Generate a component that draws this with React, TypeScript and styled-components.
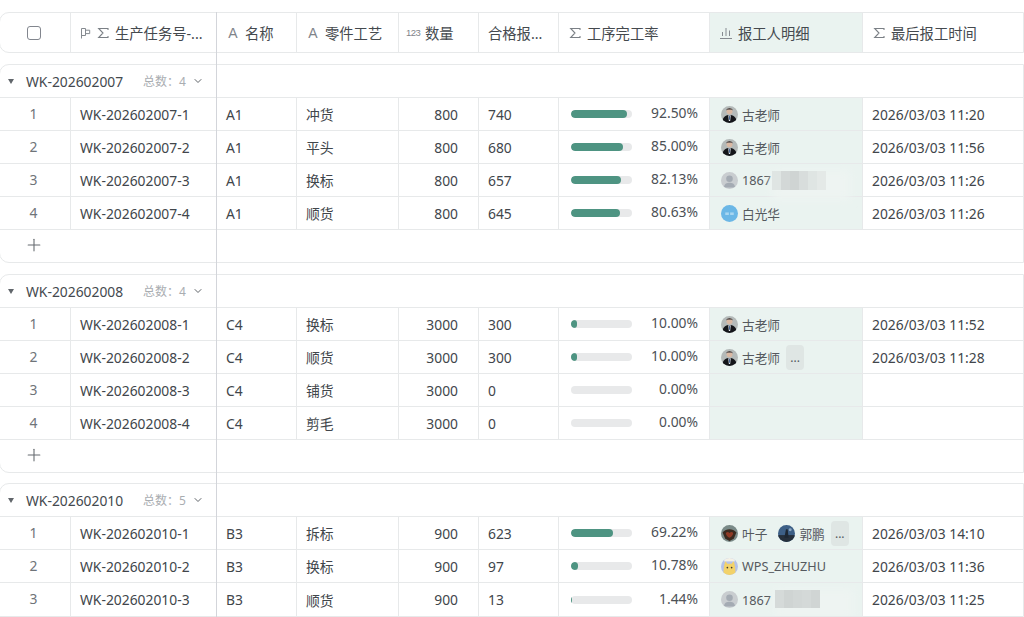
import * as React from 'react';
import styled, { createGlobalStyle } from 'styled-components';
import { ChevronDown, Plus } from 'lucide-react';

const COLUMNS = '71px 146px 80px 102px 80px 80px 151px 153px 1fr';
const LINE = '#e7e9ea';

const GlobalStyle = createGlobalStyle`
  html, body {
    margin: 0;
    height: 100%;
    overflow: hidden;
    background: #fff;
  }
  body {
    font-family: "Noto Sans", "Noto Sans CJK SC", sans-serif;
    font-size: 13.85px;
    color: #41464b;
  }
`;

const Sheet = styled.div`
  position: relative;
  height: 617px;
  overflow: hidden;
  padding-top: 12px;
  box-sizing: border-box;
  &::after {
    content: '';
    position: absolute;
    left: 216px;
    top: 12px;
    bottom: 0;
    width: 1px;
    background: #d3d5da;
  }
`;

const HeaderRow = styled.div`
  display: grid;
  grid-template-columns: ${COLUMNS};
  height: 41px;
  box-sizing: border-box;
  margin: 0 0 11px -1px;
  border: 1px solid ${LINE};
  border-radius: 10px 0 0 10px;
`;

const HeaderCell = styled.div<{ $tint?: boolean }>`
  display: flex;
  align-items: center;
  gap: 5px;
  padding-left: 9px;
  box-sizing: border-box;
  border-right: 1px solid ${LINE};
  background: ${(p) => (p.$tint ? '#eaf3f0' : 'transparent')};
  color: #44494e;
  font-size: 14.3px;
  white-space: nowrap;
  overflow: hidden;
  min-width: 0;
  &:last-child {
    border-right: 0;
  }
`;

const CheckCell = styled(HeaderCell)`
  justify-content: center;
  padding: 0 3px 0 0;
`;

const Check = styled.span`
  width: 14px;
  height: 14px;
  box-sizing: border-box;
  border: 1px solid #82868e;
  border-radius: 3px;
`;

const TypeGlyph = styled.span`
  width: 14px;
  text-align: center;
  color: #7f848a;
  font-size: 14px;
  font-family: "Liberation Sans", sans-serif;
  line-height: 1;
`;

const SmallGlyph = styled(TypeGlyph)`
  margin-left: -2px;
  font-size: 9.5px;
  letter-spacing: -0.5px;
`;

const Group = styled.section<{ $open?: boolean }>`
  border: 1px solid ${LINE};
  border-radius: ${(p) => (p.$open ? '10px 0 0 0' : '10px 0 0 10px')};
  margin: 0 0 11px -1px;
  overflow: hidden;
  &:nth-of-type(2) {
    margin-bottom: 10px;
  }
`;

const GroupHead = styled.div`
  display: flex;
  align-items: center;
  height: 33px;
  box-sizing: border-box;
  border-bottom: 1px solid ${LINE};
  padding-left: 8px;
`;

const Caret = styled.span`
  width: 0;
  height: 0;
  border-left: 3px solid transparent;
  border-right: 3px solid transparent;
  border-top: 5px solid #61666b;
  margin-right: 12px;
`;

const GroupName = styled.span`
  width: 117px;
  color: #44494e;
`;

const GroupCount = styled.span`
  display: flex;
  align-items: center;
  gap: 6px;
  font-size: 12px;
  color: #a9adb1;
  svg {
    color: #5f6469;
  }
`;

const Row = styled.div`
  display: grid;
  grid-template-columns: ${COLUMNS};
  height: 33px;
  box-sizing: border-box;
  border-bottom: 1px solid ${LINE};
  &:last-child {
    border-bottom: 0;
  }
`;

const AddRow = styled(Row)`
  height: 32px;
`;

const Cell = styled.div<{ $right?: boolean; $tint?: boolean }>`
  position: relative;
  display: flex;
  align-items: center;
  justify-content: ${(p) => (p.$right ? 'flex-end' : 'flex-start')};
  padding: ${(p) => (p.$right ? '0 20px 0 0' : '0 0 0 9px')};
  box-sizing: border-box;
  border-right: 1px solid ${LINE};
  background: ${(p) => (p.$tint ? '#eaf3f0' : 'transparent')};
  white-space: nowrap;
  min-width: 0;
  &:last-child {
    border-right: 0;
  }
`;

const IndexCell = styled(Cell)`
  justify-content: center;
  padding: 0 3px 2px 0;
  color: #6f7479;
`;

const AddCell = styled(Cell)`
  justify-content: center;
  padding: 0 3px 2px 0;
  color: #666b70;
`;

const ProgressCell = styled(Cell)`
  justify-content: space-between;
  padding: 0 11px 0 12px;
`;

const Track = styled.span`
  display: block;
  width: 61px;
  height: 8px;
  border-radius: 4px;
  background: #e8e9ea;
  overflow: hidden;
`;

const Fill = styled.span`
  display: block;
  height: 100%;
  border-radius: 4px;
  background: #4e9482;
`;

const Percent = styled.span`
  margin-bottom: 3px;
  color: #4c5156;
`;

const PeopleCell = styled(Cell)`
  padding-left: 11px;
  gap: 11px;
  overflow: visible;
`;

const Person = styled.span`
  display: flex;
  align-items: center;
  gap: 4px;
  font-size: 12.7px;
  color: #55595e;
`;

const More = styled.span`
  display: flex;
  align-items: flex-end;
  justify-content: center;
  width: 18px;
  height: 25px;
  margin-left: -5px;
  padding-bottom: 6px;
  box-sizing: border-box;
  border-radius: 4px;
  background: #dfe6e4;
  font-size: 12px;
  line-height: 1;
  color: #55595e;
`;

const Mosaic = styled.svg`
  position: absolute;
  top: 0;
  z-index: 2;
  pointer-events: none;
`;

type Face = 'teacher' | 'blank' | 'blue' | 'leaf' | 'peng' | 'pika';

const Avatar = ({ face }: { face: Face }) => (
  <svg width="17" height="17" viewBox="0 0 16 16" style={{ flex: 'none' }}>
    <defs>
      <clipPath id="round">
        <circle cx="8" cy="8" r="8" />
      </clipPath>
    </defs>
    <g clipPath="url(#round)">
      {face === 'teacher' && (
        <>
          <rect width="16" height="16" fill="#b4bab9" />
          <circle cx="8" cy="5" r="2.8" fill="#d9b9a4" />
          <path d="M5 4.200C5 1.400 11 1.400 11 4.200L10 3.200H6Z" fill="#26262a" />
          <path d="M1 16C1.500 9.500 5 8.500 8 8.500s6.500 1 7 7.500Z" fill="#14161a" />
          <path d="M6.800 8.600h2.400L8.600 14H7.400Z" fill="#e8ecef" />
          <path d="M7.600 9.200h.8l.2 3.800H7.400Z" fill="#45628f" />
        </>
      )}
      {face === 'blank' && (
        <>
          <rect width="16" height="16" fill="#c9cdd0" />
          <circle cx="8" cy="6.300" r="3.100" fill="#a4abb3" />
          <path d="M2.800 14.500C3.200 10.500 5.500 10 8 10s4.800.5 5.200 4.500Z" fill="#a4abb3" />
        </>
      )}
      {face === 'blue' && (
        <>
          <rect width="16" height="16" fill="#6bb7e6" />
          <rect x="4" y="7" width="3.400" height="2.400" fill="#a9d6f1" />
          <rect x="8.600" y="7" width="3.400" height="2.400" fill="#a9d6f1" />
        </>
      )}
      {face === 'leaf' && (
        <>
          <rect width="16" height="16" fill="#7a8a88" />
          <path d="M1.500 7C5 3 11 3 14.500 7L12 13 8 15 4 13Z" fill="#3a2a20" />
          <path d="M4.500 7.500C6 6 7 6.500 8 7.500 9 6.500 10.500 6 11.500 7.500 11.500 10 9 11.500 8 12 7 11.500 4.500 10 4.500 7.500Z" fill="#8f3a26" />
        </>
      )}
      {face === 'peng' && (
        <>
          <rect width="16" height="16" fill="#3d5f86" />
          <rect y="9.500" width="16" height="6.500" fill="#26303c" />
          <path d="M6 12 7.500 4h1.600L10 12Z" fill="#1d2733" />
          <circle cx="11.500" cy="4.500" r="1.400" fill="#8ea8c2" />
        </>
      )}
      {face === 'pika' && (
        <>
          <rect width="16" height="16" fill="#b5c2e8" />
          <path d="M2.500 16C2 9 3.500 5.500 4 2.500L6 5.500h4l2-3C12.500 5.500 14 9 13.500 16Z" fill="#f2d26a" />
          <rect x="3" y="0" width="10" height="3.200" fill="#f4f1e6" />
          <circle cx="6" cy="9" r=".8" fill="#3d3a30" />
          <circle cx="10" cy="9" r=".8" fill="#3d3a30" />
        </>
      )}
    </g>
  </svg>
);

const FlagIcon = () => (
  <svg width="11" height="12" viewBox="0 0 11 12" fill="none" stroke="#858a90" strokeWidth="1">
    <path d="M1.500 11.500V1.500h4v7h-4M5.500 3.200h4.200v3.400H5.500" />
  </svg>
);

const SigmaIcon = () => (
  <svg width="14" height="12" viewBox="0 0 14 12" fill="none" stroke="#7b8086" strokeWidth="1.100">
    <path d="M12 2.900V1.500H2.700L7 6l-4.300 4.500H12V9.100" />
  </svg>
);

const ChartIcon = () => (
  <svg width="14" height="12" viewBox="0 0 14 12" fill="none" stroke="#858a90" strokeWidth="1">
    <path d="M1 11.500h12M3.500 9V5M7 9V1M10.500 9V3.500" />
  </svg>
);

const BlurPatch = ({ left, cols, height }: { left: number; cols: string[]; height: number }) => (
  <Mosaic width="110" height="46" viewBox="0 0 110 46" style={{ left }}>
    <defs>
      <filter id="soft" x="-20%" y="-20%" width="140%" height="140%">
        <feGaussianBlur stdDeviation="0.7" />
      </filter>
      <filter id="halo" x="-30%" y="-50%" width="160%" height="200%">
        <feGaussianBlur stdDeviation="4" />
      </filter>
    </defs>
    <rect x="8" y="6" width="78" height="30" fill="#eef4f2" filter="url(#halo)" />
    <g filter="url(#soft)">
      {cols.map((c, i) => (
        <rect key={i} x={8 + i * 9} y={7} width="9" height={height} fill={c} />
      ))}
    </g>
  </Mosaic>
);

type Worker = { name: string; face: Face };

type Task = {
  id: string;
  name: string;
  step: string;
  qty: number;
  ok: number;
  rate: number;
  workers: Worker[];
  more?: boolean;
  blur?: { left: number; cols: string[]; height: number };
  time: string;
};

const gu: Worker = { name: '古老师', face: 'teacher' };

const groups: { code: string; total: number; tasks: Task[] }[] = [
  {
    code: 'WK-202602007',
    total: 4,
    tasks: [
      { id: '1', name: 'A1', step: '冲货', qty: 800, ok: 740, rate: 92.5, workers: [gu], time: '2026/03/03 11:20' },
      { id: '2', name: 'A1', step: '平头', qty: 800, ok: 680, rate: 85, workers: [gu], time: '2026/03/03 11:56' },
      {
        id: '3',
        name: 'A1',
        step: '换标',
        qty: 800,
        ok: 657,
        rate: 82.13,
        workers: [{ name: '1867', face: 'blank' }],
        blur: { left: 54, cols: ['#dfe5e3', '#d3d8d7', '#cfd4d3', '#d8dddc', '#dfe5e3', '#e4e9e7'], height: 19 },
        time: '2026/03/03 11:26',
      },
      { id: '4', name: 'A1', step: '顺货', qty: 800, ok: 645, rate: 80.63, workers: [{ name: '白光华', face: 'blue' }], time: '2026/03/03 11:26' },
    ],
  },
  {
    code: 'WK-202602008',
    total: 4,
    tasks: [
      { id: '1', name: 'C4', step: '换标', qty: 3000, ok: 300, rate: 10, workers: [gu], time: '2026/03/03 11:52' },
      { id: '2', name: 'C4', step: '顺货', qty: 3000, ok: 300, rate: 10, workers: [gu], more: true, time: '2026/03/03 11:28' },
      { id: '3', name: 'C4', step: '铺货', qty: 3000, ok: 0, rate: 0, workers: [], time: '' },
      { id: '4', name: 'C4', step: '剪毛', qty: 3000, ok: 0, rate: 0, workers: [], time: '' },
    ],
  },
  {
    code: 'WK-202602010',
    total: 5,
    tasks: [
      {
        id: '1',
        name: 'B3',
        step: '拆标',
        qty: 900,
        ok: 623,
        rate: 69.22,
        workers: [
          { name: '叶子', face: 'leaf' },
          { name: '郭鹏', face: 'peng' },
        ],
        more: true,
        time: '2026/03/03 14:10',
      },
      { id: '2', name: 'B3', step: '换标', qty: 900, ok: 97, rate: 10.78, workers: [{ name: 'WPS_ZHUZHU', face: 'pika' }], time: '2026/03/03 11:36' },
      {
        id: '3',
        name: 'B3',
        step: '顺货',
        qty: 900,
        ok: 13,
        rate: 1.44,
        workers: [{ name: '1867', face: 'blank' }],
        blur: { left: 57, cols: ['#d5dad9', '#cfd4d3', '#d2d7d6', '#d4d9d8', '#d0d5d4'], height: 18 },
        time: '2026/03/03 11:25',
      },
    ],
  },
];

const TaskRow = ({ task, code }: { task: Task; code: string }) => (
  <Row>
    <IndexCell>{task.id}</IndexCell>
    <Cell>{`${code}-${task.id}`}</Cell>
    <Cell>{task.name}</Cell>
    <Cell>{task.step}</Cell>
    <Cell $right>{task.qty}</Cell>
    <Cell>{task.ok}</Cell>
    <ProgressCell>
      <Track>
        <Fill style={{ width: `${task.rate}%` }} />
      </Track>
      <Percent>{task.rate.toFixed(2)}%</Percent>
    </ProgressCell>
    <PeopleCell $tint>
      {task.workers.map((w) => (
        <Person key={w.name}>
          <Avatar face={w.face} />
          {w.name}
        </Person>
      ))}
      {task.more && <More>...</More>}
      {task.blur && <BlurPatch {...task.blur} />}
    </PeopleCell>
    <Cell>{task.time}</Cell>
  </Row>
);

const App: React.FC = () => (
  <>
    <GlobalStyle />
    <Sheet>
      <HeaderRow>
        <CheckCell>
          <Check />
        </CheckCell>
        <HeaderCell>
          <FlagIcon />
          <SigmaIcon />
          生产任务号-...
        </HeaderCell>
        <HeaderCell>
          <TypeGlyph>A</TypeGlyph>名称
        </HeaderCell>
        <HeaderCell>
          <TypeGlyph>A</TypeGlyph>零件工艺
        </HeaderCell>
        <HeaderCell>
          <SmallGlyph>123</SmallGlyph>数量
        </HeaderCell>
        <HeaderCell>合格报...</HeaderCell>
        <HeaderCell>
          <SigmaIcon />
          工序完工率
        </HeaderCell>
        <HeaderCell $tint>
          <ChartIcon />
          报工人明细
        </HeaderCell>
        <HeaderCell>
          <SigmaIcon />
          最后报工时间
        </HeaderCell>
      </HeaderRow>
      {groups.map((g) => {
        const complete = g.tasks.length === g.total;
        return (
          <Group key={g.code} $open={!complete}>
            <GroupHead>
              <Caret />
              <GroupName>{g.code}</GroupName>
              <GroupCount>
                总数：{g.total}
                <ChevronDown size={12} strokeWidth={2} />
              </GroupCount>
            </GroupHead>
            {g.tasks.map((t) => (
              <TaskRow key={t.id} task={t} code={g.code} />
            ))}
            {complete && (
              <AddRow>
                <AddCell>
                  <Plus size={20} strokeWidth={1.3} />
                </AddCell>
              </AddRow>
            )}
          </Group>
        );
      })}
    </Sheet>
  </>
);

export default App;
